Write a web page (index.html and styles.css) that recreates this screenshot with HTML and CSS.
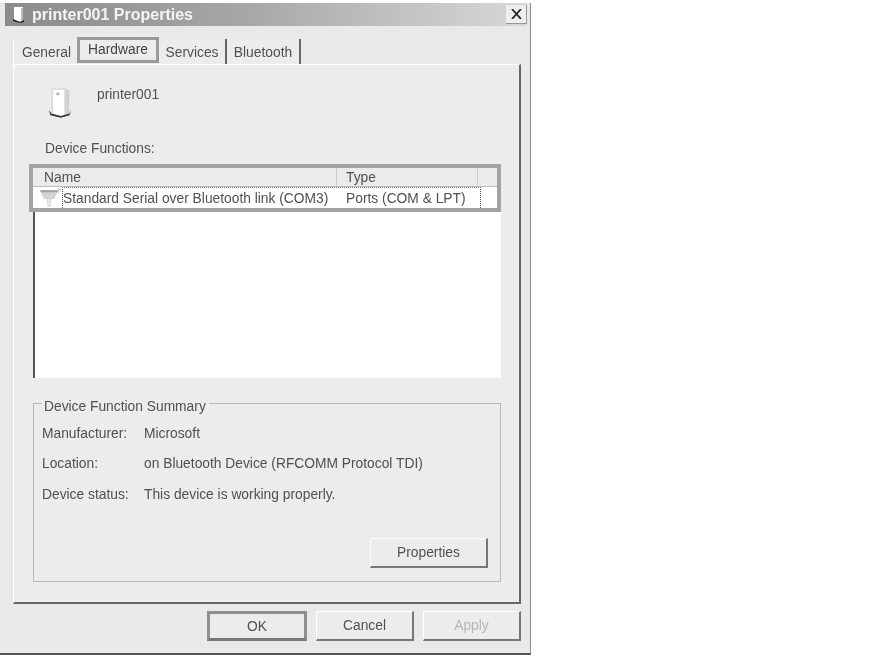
FILE: index.html
```html
<!DOCTYPE html>
<html lang="en">
<head>
    <meta charset="UTF-8">
    <title>printer001 Properties</title>
    <link rel="stylesheet" href="styles.css">
</head>
<body>
    <div class="window">
        <!-- title bar -->
        <div class="titlebar">
            <svg class="title-icon" width="16" height="18" viewBox="0 0 16 18">
                <path d="M4 1h9v13l-3 2-6-2z" fill="#fff"/>
                <path d="M11 2h2v12l-2 1z" fill="#bbb"/>
                <path d="M3 13l7 3 4-2v2l-4 1-7-2z" fill="#222"/>
            </svg>
            <span class="title-text">printer001 Properties</span>
            <div class="close-btn">
                <svg width="11" height="10" viewBox="0 0 11 10">
                    <path d="M1 0l9 10M10 0l-9 10" fill="none" stroke="#222" stroke-width="1.800"/>
                </svg>
            </div>
        </div>

        <!-- tabs -->
        <div class="tabs">
            <div class="tab tab-general">General</div>
            <div class="tab tab-hardware">Hardware</div>
            <div class="tab tab-services">Services</div>
            <div class="tab tab-bluetooth">Bluetooth</div>
        </div>

        <div class="panel">
            <div class="device">
                <svg class="device-icon" width="26" height="34" viewBox="0 0 30 36">
                    <path d="M6 2h16l3 2v27l-9 2-10-3z" fill="#fff"/>
                    <path d="M20 3h5v28l-5 1z" fill="#d4d4d4"/>
                    <path d="M6 2h16l3 2v27M6 2v28" fill="none" stroke="#c4c4c4"/>
                    <rect x="11" y="6" width="3" height="3" fill="#aaa"/>
                    <path d="M2 26l3 4 11 3 10-3 2-4-2 6-10 3-12-3z" fill="#333"/>
                </svg>
                <span class="device-name">printer001</span>
            </div>

            <div class="functions-label">Device Functions:</div>

            <div class="list">
                <div class="list-highlight">
                    <div class="list-head">
                        <div class="col-name">Name</div>
                        <div class="col-type">Type</div>
                        <div class="col-rest"></div>
                    </div>
                    <div class="list-row">
                        <svg class="port-icon" width="23" height="20" viewBox="0 0 24 20">
                            <path d="M1 2h19l-4 9h-3l-1 8H9l-1-8H5z" fill="#d2d2d2"/>
                            <path d="M1 2h19l-1 2H2z" fill="#a0a0a0"/>
                            <path d="M9 11h3v8H9z" fill="#e6e6e6"/>
                            <path d="M20 0v5M22 0v3" stroke="#b4b4b4" fill="none"/>
                        </svg>
                        <div class="row-selected">
                            <span class="cell-name">Standard Serial over Bluetooth link (COM3)</span>
                            <span class="cell-type">Ports (COM &amp; LPT)</span>
                        </div>
                    </div>
                </div>
                <div class="list-empty"></div>
            </div>

            <div class="summary">
                <div class="summary-title">Device Function Summary</div>
                <div class="summary-grid">
                    <span>Manufacturer:</span><span>Microsoft</span>
                    <span>Location:</span><span>on Bluetooth Device (RFCOMM Protocol TDI)</span>
                    <span>Device status:</span><span>This device is working properly.</span>
                </div>
                <div class="summary-actions">
                    <div class="btn btn-props">Properties</div>
                </div>
            </div>
        </div>

        <!-- bottom buttons -->
        <div class="footer">
            <div class="btn btn-ok">OK</div>
            <div class="btn btn-cancel">Cancel</div>
            <div class="btn btn-apply">Apply</div>
        </div>
    </div>
</body>
</html>
```

FILE: styles.css
```css
html, body {
    margin: 0;
    padding: 0;
    background: #fff;
}
body {
    height: 655px;
    overflow: hidden;
    font-family: "Liberation Sans", Arial, sans-serif;
    font-size: 13.8px;
    color: #505050;
}
.window {
    box-sizing: border-box;
    width: 531px;
    height: 652px;
    margin-top: 3px;
    padding: 0 3px 0 5px;
    background: #e9e9e9;
    border-right: 1px solid #8c8c8c;
    border-bottom: 2px solid #555;
    filter: blur(0.45px);
}
.titlebar {
    display: flex;
    align-items: center;
    height: 23px;
    background: linear-gradient(to right, #8b8b8b, #a6a6a6 45%, #d8d8d8);
}
.title-icon {
    margin-left: 5px;
}
.title-text {
    margin-left: 6px;
    font-size: 16px;
    font-weight: bold;
    color: #f4f4f4;
}
.close-btn {
    display: flex;
    align-items: center;
    justify-content: center;
    width: 21px;
    height: 19px;
    margin-left: auto;
    background: #eee;
    border-right: 1px solid #999;
    border-bottom: 1px solid #999;
    box-sizing: border-box;
}
.tabs {
    display: flex;
    align-items: flex-end;
    height: 38px;
    margin-left: 8px;
}
.tab {
    box-sizing: border-box;
    height: 25px;
    padding-top: 5px;
    text-align: center;
    background: #ececec;
    border-right: 2px solid #666;
}
.tab-general {
    width: 64px;
    padding-top: 6px;
    padding-left: 2px;
    border-right: 0;
    border-left: 1px solid #fff;
}
.tab-hardware {
    width: 82px;
    height: 26px;
    margin-bottom: 1px;
    padding-top: 2px;
    border: 3px solid #9a9a9a;
    color: #444;
}
.tab-services {
    width: 68px;
    padding-top: 6px;
}
.tab-bluetooth {
    width: 74px;
    padding-top: 6px;
}
.panel {
    box-sizing: border-box;
    width: 508px;
    height: 540px;
    margin-left: 8px;
    padding: 0 16px 0 19px;
    border-top: 1px solid #fff;
    border-left: 1px solid #fff;
    border-right: 2px solid #666;
    border-bottom: 2px solid #666;
    background: #ececec;
}
.device {
    display: flex;
    align-items: flex-start;
    height: 50px;
    padding-top: 20px;
}
.device-icon {
    margin-left: 14px;
    margin-top: 1px;
}
.device-name {
    margin-left: 24px;
    margin-top: 2px;
}
.functions-label {
    margin-left: 12px;
    height: 25px;
    line-height: 20px;
    padding-top: 4px;
    box-sizing: content-box;
}
.list {
    margin: 0 0 0 -4px;
    width: 472px;
}
.list-highlight {
    border: 4px solid #a3a3a3;
    background: #fff;
}
.list-head {
    display: flex;
    height: 18px;
    line-height: 19px;
    background: #ebebeb;
    border-bottom: 1px solid #bbb;
}
.col-name {
    width: 304px;
    padding-left: 11px;
    box-sizing: border-box;
    border-right: 1px solid #ccc;
}
.col-type {
    width: 141px;
    padding-left: 9px;
    box-sizing: border-box;
    border-right: 1px solid #ccc;
}
.list-row {
    display: flex;
    align-items: center;
    height: 21px;
}
.port-icon {
    margin-left: 6px;
    flex: none;
}
.row-selected {
    display: flex;
    align-items: center;
    box-sizing: border-box;
    width: 419px;
    height: 21px;
    border: 1px dotted #555;
    border-bottom: 0;
    border-top-color: #777;
}
.cell-name {
    width: 283px;
    white-space: nowrap;
}
.cell-type {
    white-space: nowrap;
}
.list-empty {
    box-sizing: border-box;
    height: 166px;
    margin-left: 4px;
    background: #fff;
    border-left: 2px solid #555;
}
.summary {
    box-sizing: border-box;
    position: relative;
    height: 179px;
    width: 468px;
    margin-top: 25px;
    border: 1px solid #b8b8b8;
    padding: 0 12px 0 8px;
}
.summary-title {
    position: absolute;
    top: -5px;
    left: 8px;
    padding: 0 3px 0 2px;
    background: #ececec;
    line-height: 16px;
}
.summary-grid {
    display: grid;
    grid-template-columns: 102px 1fr;
    grid-auto-rows: 30.500px;
    padding-top: 14px;
    align-items: center;
}
.summary-actions {
    display: flex;
    justify-content: flex-end;
    margin-top: 28px;
}
.btn {
    box-sizing: border-box;
    display: flex;
    align-items: center;
    justify-content: center;
    background: #ececec;
    border-top: 1px solid #fff;
    border-left: 1px solid #fff;
    border-right: 2px solid #777;
    border-bottom: 2px solid #777;
}
.btn-props {
    width: 118px;
    height: 30px;
}
.footer {
    display: flex;
    justify-content: flex-end;
    align-items: flex-start;
    gap: 9px;
    padding: 7px 6px 0 0;
}
.btn-ok {
    width: 100px;
    height: 30px;
    border: 3px solid #8f8f8f;
    border-bottom-color: #777;
}
.btn-cancel {
    width: 98px;
    height: 30px;
}
.btn-apply {
    width: 98px;
    height: 30px;
    color: #b5b5b5;
}
```
